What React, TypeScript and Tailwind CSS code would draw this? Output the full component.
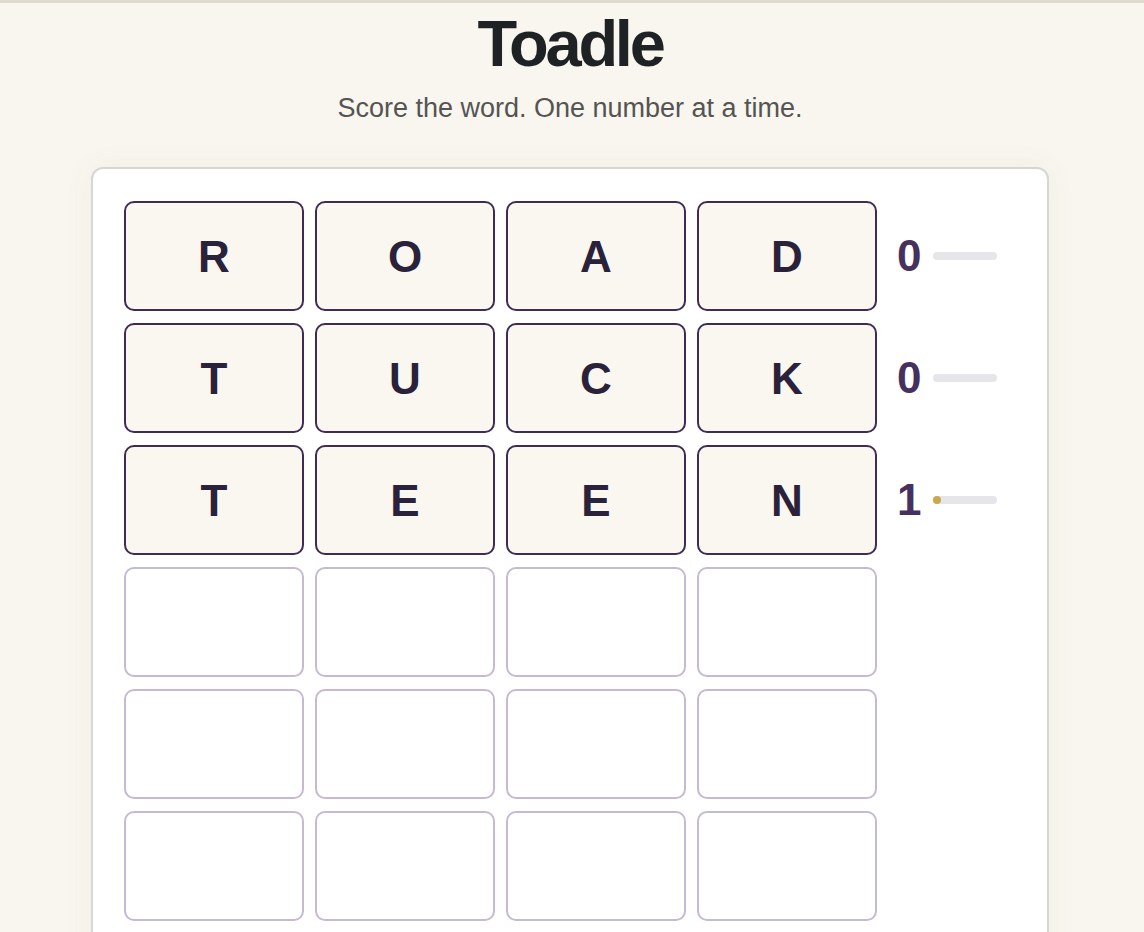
const rows: { word: string; score: number }[] = [
  { word: 'ROAD', score: 0 },
  { word: 'TUCK', score: 0 },
  { word: 'TEEN', score: 1 },
];

const EMPTY_ROWS = 3;

function Tile({ letter }: { letter?: string }) {
  if (!letter) {
    return <div className="h-[110px] w-[180px] rounded-[10px] border-2 border-[#c6bad3] bg-white" />;
  }
  return (
    <div className="flex h-[110px] w-[180px] items-center justify-center rounded-[10px] border-2 border-[#3f2c55] bg-[#faf7f1] pt-[2px] text-[44px] font-bold text-[#29223a]">
      {letter}
    </div>
  );
}

function Score({ value }: { value: number }) {
  return (
    <div className="flex items-center gap-[11px] pl-[20px]">
      <span className="w-[25px] text-[44px] font-bold leading-none text-[#45305e]">{value}</span>
      <div className="relative h-[8px] w-[64px] rounded-full bg-[#e6e6ea]">
        {value > 0 && <span className="absolute left-0 top-0 h-[8px] w-[8px] rounded-full bg-[#c9a84e]" />}
      </div>
    </div>
  );
}

export default function App() {
  return (
    <div
      className="min-h-[932px] overflow-hidden border-t-[3px] border-[#dedbcb] bg-[#f8f6ee] pr-[4px]"
      style={{ fontFamily: '"Liberation Sans", Arial, sans-serif' }}
    >
      <header className="flex flex-col items-center">
        <h1 className="mt-[5px] text-[65px] font-bold leading-[72px] tracking-[-0.05em] text-[#1f2224]">Toadle</h1>
        <p className="mt-[12px] text-[27px] leading-[32px] text-[#555453]">Score the word. One number at a time.</p>
      </header>

      <main className="mx-auto mt-[43px] h-[800px] w-[958px] rounded-t-[12px] border-2 border-[#d6d6d3] bg-white px-[31px] pt-[32px] shadow-[0_0_30px_rgba(120,110,80,0.06)]">
        <div className="flex flex-col gap-[12px]">
          {rows.map((row, i) => (
            <div key={i} className="flex items-center">
              <div className="flex gap-[11px]">
                {row.word.split('').map((l, j) => (
                  <Tile key={j} letter={l} />
                ))}
              </div>
              <Score value={row.score} />
            </div>
          ))}
          {Array.from({ length: EMPTY_ROWS }).map((_, i) => (
            <div key={`e${i}`} className="flex gap-[11px]">
              {[0, 1, 2, 3].map((j) => (
                <Tile key={j} />
              ))}
            </div>
          ))}
        </div>
      </main>
    </div>
  );
}
